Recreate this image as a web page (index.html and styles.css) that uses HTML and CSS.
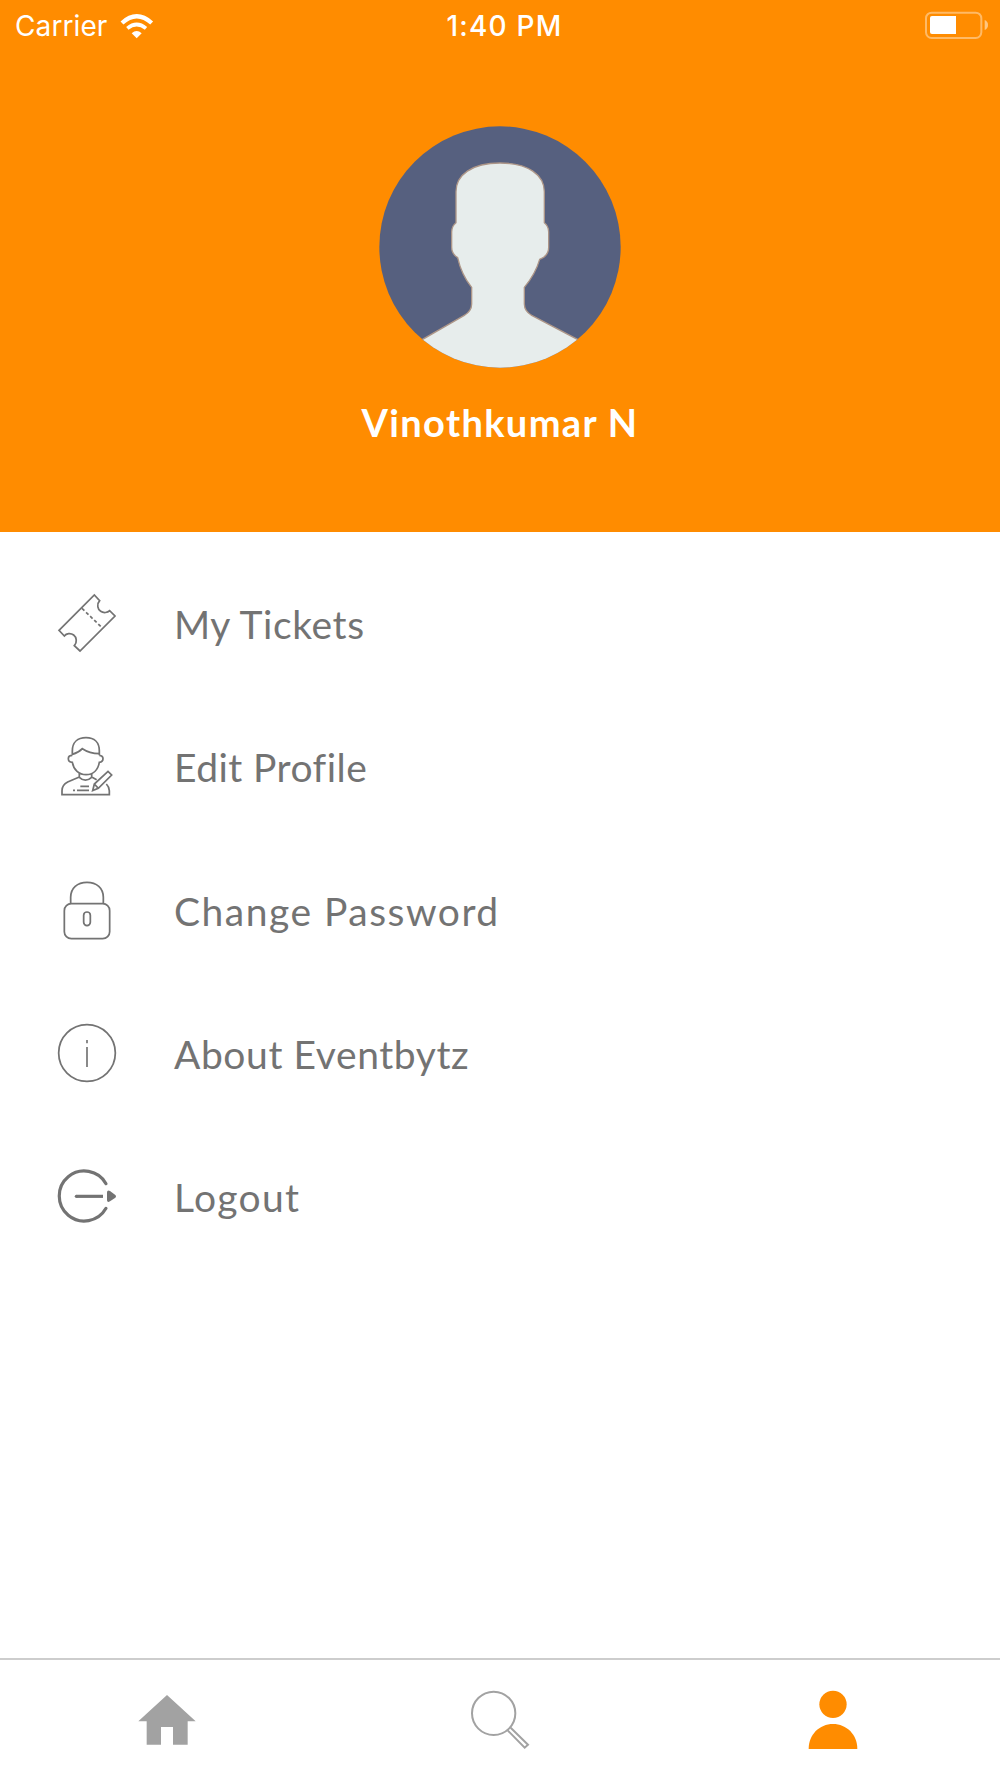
FILE: index.html
```html
<!DOCTYPE html>
<html lang="en">
<head>
<meta charset="utf-8">
<title>Profile</title>
<link rel="stylesheet" href="styles.css">
</head>
<body>
<div class="screen">
  <header class="header">
    <div class="status">
      <div class="status-left">
        <span class="carrier">Carrier</span>
        <svg class="wifi" viewBox="360 33 108 78">
          <path d="M369 63Q413 23 458 63" fill="none" stroke="#fff" stroke-width="13"/>
          <path d="M385 79Q413 56 441 79" fill="none" stroke="#fff" stroke-width="11"/>
          <path d="M398 94Q413 80 428 94L413 109Z" fill="#fff"/>
        </svg>
      </div>
      <span class="time">1:40 PM</span>
      <div class="status-right">
        <svg class="battery" viewBox="72 27 198 90">
          <rect x="78" y="35" width="166" height="76" rx="17" fill="none" stroke="#fff" stroke-opacity=".4" stroke-width="6"/>
          <path d="M96 45H168V99H96Q90 99 90 93V51Q90 45 96 45Z" fill="#fff"/>
          <path d="M254 57Q264 61 264 72T254 87Z" fill="#fff" fill-opacity=".5"/>
        </svg>
      </div>
    </div>
    <svg class="avatar" viewBox="87 46 726 726">
      <defs><clipPath id="disc"><circle cx="450" cy="409" r="362"/></clipPath></defs>
      <circle cx="450" cy="409" r="362" fill="#56607f"/>
      <path clip-path="url(#disc)" fill="#e7edec" stroke="#ad9688" stroke-width="4" d="M318 336V243C318 193 365 157 450 157S583 193 583 243V336Q596 346 596 364V410Q596 436 569 446C560 478 542 507 523 530V580Q523 601 545 614L682 686L740 800H160L218 686L343 614Q365 601 365 580V530C346 507 331 478 323 441Q305 430 305 410V364Q305 346 318 336Z"/>
    </svg>
    <h1 class="name">Vinothkumar N</h1>
  </header>

  <nav class="menu">
    <a class="item">
      <svg class="icon" viewBox="51 69 180 180">
        <path d="M57 181L163 75L179 92C169 103 173 118 182 124C191 130 203 128 209 122L225 138L120 243L103 227C112 217 110 202 101 195C92 188 79 190 73 198Z"/>
        <path d="M126 115L187 174" stroke-dasharray="10 7"/>
      </svg>
      <span class="label tickets">My Tickets</span>
    </a>
    <a class="item">
      <svg class="icon" viewBox="51 49 180 180">
        <path d="M97 107V94C97 68 113 54 138 54S178 68 178 94V107M97 104Q116 99 127 87Q148 101 178 102M97 107Q85 107 85 117T97 128C101 151 117 165 138 165S174 151 178 128Q189 126 189 117T178 107"/>
        <path d="M118 161V172L83 187Q66 196 66 213V225H208V213Q208 202 199 193M155 161V172L170 180M118 173Q136 190 155 173"/>
        <path d="M158 213L163 193L204 155L215 166L175 206ZM163 193L175 206"/>
        <path d="M121 200H147M111 212H147M99 212H105"/>
      </svg>
      <span class="label edit">Edit Profile</span>
    </a>
    <a class="item">
      <svg class="icon" viewBox="51 59 180 180">
        <rect x="73" y="130" width="136" height="105" rx="21"/>
        <path d="M92 130V111C92 83 112 66 141 66S190 83 190 111V130"/>
        <rect x="131" y="155" width="20" height="41" rx="10"/>
      </svg>
      <span class="label password">Change Password</span>
    </a>
    <a class="item">
      <svg class="icon" viewBox="51 69 180 180">
        <circle cx="141" cy="159" r="85"/>
        <path d="M141 120V130M141 141V201" stroke-width="5"/>
      </svg>
      <span class="label about">About Eventbytz</span>
    </a>
    <a class="item">
      <svg class="icon" viewBox="51 79 180 180">
        <path d="M198 132A75 75 0 1 0 198 206" stroke-width="9.5" stroke-linecap="round"/>
        <path d="M109 170H189" stroke-width="9.5"/>
        <circle cx="109" cy="170" r="4.7" class="solid"/>
        <path class="solid" d="M201 158Q202 149 210 154L225 165Q231 170 225 175L210 185Q202 190 201 182Z"/>
      </svg>
      <span class="label logout">Logout</span>
    </a>
  </nav>

  <footer class="tabs">
    <a class="tab"><svg viewBox="50 150 180 180"><path fill="#a2a2a2" d="M140 165L226 244H202V314H158V261H122V314H79V244H54Z"/></svg></a>
    <a class="tab"><svg viewBox="60 150 180 180" fill="none" stroke="#a2a2a2" stroke-width="6"><circle cx="131" cy="220" r="65"/><path d="M182 263L234 314L224 323L173 271"/></svg></a>
    <a class="tab"><svg viewBox="70 150 180 180" fill="#ff8c00"><circle cx="160" cy="193" r="41"/><path d="M87 327C87 284 119 252 160 252S233 284 233 327Z"/></svg></a>
  </footer>
</div>
</body>
</html>
```
FILE: styles.css
```css
body {
  margin: 0;
  background: #fff;
}

.screen {
  display: flex;
  flex-direction: column;
  width: 1000px;
  height: 1778px;
}

.header {
  display: flex;
  flex-direction: column;
  align-items: center;
  height: 531.5px;
  background: #ff8c00;
  color: #fff;
}

.status {
  display: grid;
  grid-template-columns: 1fr auto 1fr;
  align-items: center;
  box-sizing: border-box;
  width: 100%;
  height: 50px;
  padding: 0 10px 0 15px;
  font: 28px/50px Inter, sans-serif;
}

.status-left {
  display: flex;
  align-items: center;
  gap: 12px;
}

.status-right {
  display: flex;
  justify-content: flex-end;
}

.carrier {
  letter-spacing: 0.1px;
  padding-top: 1px;
}

.time {
  font-weight: 500;
  letter-spacing: 1.2px;
  padding: 1px 0 0 4px;
}

.wifi {
  width: 36px;
  height: 26px;
}

.battery {
  width: 66px;
  height: 30px;
  margin-bottom: 1px;
}

.avatar {
  width: 242px;
  height: 242px;
  margin-top: 75.5px;
}

.name {
  margin: 30px 0 0;
  font: 700 38px/48px Lato, sans-serif;
  letter-spacing: 1.35px;
}

.menu {
  display: flex;
  flex-direction: column;
  flex: 1;
  padding-top: 20px;
}

.item {
  display: flex;
  align-items: center;
  gap: 57px;
  height: 143.33px;
  padding-left: 57px;
}

.icon {
  width: 60px;
  height: 60px;
  fill: none;
  stroke: #737373;
  stroke-width: 5.2;
}

.solid {
  fill: #737373;
  stroke: none;
}

.label {
  padding-top: 2px;
  color: #737373;
  font: 39px/48px Lato, sans-serif;
}

.tickets {
  letter-spacing: 0.6px;
}

.edit {
  letter-spacing: 0.45px;
}

.password {
  letter-spacing: 1.5px;
}

.about {
  letter-spacing: 0.6px;
}

.logout {
  letter-spacing: 1.3px;
}

.tabs {
  display: grid;
  grid-template-columns: repeat(3, 1fr);
  align-items: center;
  box-sizing: border-box;
  height: 120px;
  padding-top: 2px;
  border-top: 2px solid #cdcdcd;
}

.tab {
  display: flex;
  justify-content: center;
}

.tab svg {
  width: 60px;
  height: 60px;
}
```
